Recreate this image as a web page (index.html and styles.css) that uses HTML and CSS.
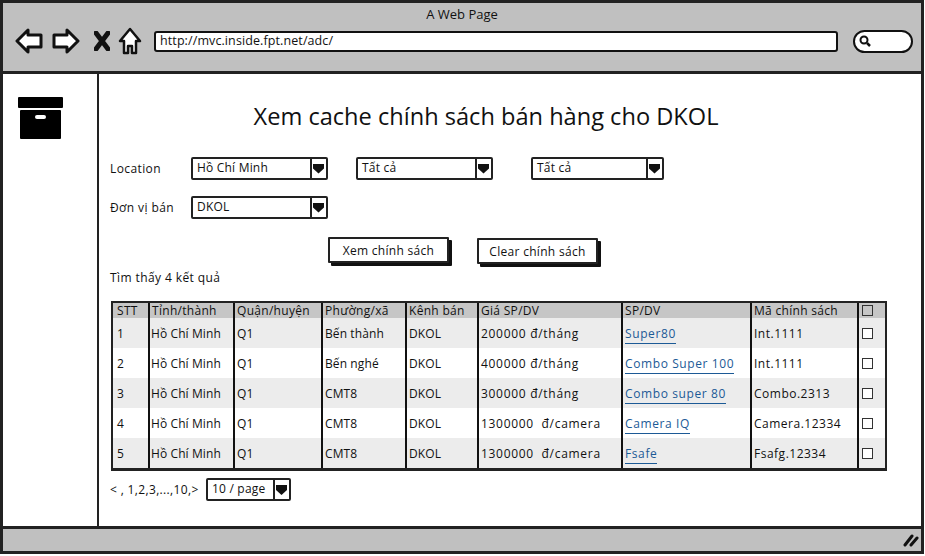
FILE: index.html
```html
<!DOCTYPE html>
<html>
<head>
    <title>A Web Page</title>
    <link rel="stylesheet" href="styles.css">
</head>
<body>
<div class="window">

    <!-- Browser chrome -->
    <div class="chrome">
        <div class="page-title">A Web Page</div>
        <div class="toolbar">
            <svg class="nav-icon" width="28" height="26" viewBox="0 0 28 26"><path d="M2 13 L13 2 V7 H26 V19 H13 V24 Z" fill="#fff" stroke="#111" stroke-width="3" stroke-linejoin="round"/></svg>
            <svg class="nav-icon" width="28" height="26" viewBox="0 0 28 26"><path d="M26 13 L15 2 V7 H2 V19 H15 V24 Z" fill="#fff" stroke="#111" stroke-width="3" stroke-linejoin="round"/></svg>
            <svg class="nav-icon stop" width="16" height="20" viewBox="0 0 16 20"><path d="M2 2 L14 18 M14 2 L2 18" stroke="#111" stroke-width="5" stroke-linecap="round"/></svg>
            <svg class="nav-icon home" width="24" height="28" viewBox="0 0 24 28"><path d="M12 2 L22 14 H18 V26 H14 V19 H10 V26 H6 V14 H2 Z" fill="#fff" stroke="#111" stroke-width="2.5" stroke-linejoin="round"/></svg>
            <div class="address">http://mvc.inside.fpt.net/adc/</div>
            <div class="search">
                <svg width="14" height="14" viewBox="0 0 14 14"><circle cx="6" cy="6" r="3.5" fill="#fff" stroke="#111" stroke-width="2"/><path d="M9 9 L12 12" stroke="#111" stroke-width="2.5"/></svg>
            </div>
        </div>
    </div>

    <div class="main">
        <div class="sidebar">
            <svg width="46" height="42" viewBox="0 0 46 42"><rect x="0" y="0" width="45" height="11" rx="1" fill="#000"/><rect x="2" y="13" width="41" height="29" rx="1" fill="#000"/><rect x="17" y="18" width="11" height="4" rx="2" fill="#fff"/></svg>
        </div>

        <div class="content">
            <h1>Xem cache chính sách bán hàng cho DKOL</h1>

            <div class="filter-row">
                <label>Location</label>
                <div class="select w-wide"><span>Hồ Chí Minh</span><i class="arrow"></i></div>
                <div class="select w-wide gap-a"><span>Tất cả</span><i class="arrow"></i></div>
                <div class="select w-narrow gap-b"><span>Tất cả</span><i class="arrow"></i></div>
            </div>
            <div class="filter-row second">
                <label>Đơn vị bán</label>
                <div class="select w-wide"><span>DKOL</span><i class="arrow"></i></div>
            </div>

            <div class="actions">
                <button>Xem chính sách</button>
                <button>Clear chính sách</button>
            </div>

            <p class="result-count">Tìm thấy 4 kết quả</p>

            <table>
                <colgroup>
                    <col class="c-stt"><col class="c-city"><col class="c-district"><col class="c-ward">
                    <col class="c-channel"><col class="c-price"><col class="c-service"><col class="c-code"><col class="c-check">
                </colgroup>
                <thead>
                    <tr>
                        <th>STT</th><th>Tỉnh/thành</th><th>Quận/huyện</th><th>Phường/xã</th><th>Kênh bán</th>
                        <th>Giá SP/DV</th><th>SP/DV</th><th>Mã chính sách</th><th><i class="check"></i></th>
                    </tr>
                </thead>
                <tbody>
                    <tr>
                        <td>1</td><td>Hồ Chí Minh</td><td>Q1</td><td>Bến thành</td><td>DKOL</td>
                        <td>200000 đ/tháng</td><td><a href="#">Super80</a></td><td>Int.1111</td><td><i class="check"></i></td>
                    </tr>
                    <tr>
                        <td>2</td><td>Hồ Chí Minh</td><td>Q1</td><td>Bến nghé</td><td>DKOL</td>
                        <td>400000 đ/tháng</td><td><a href="#">Combo Super 100</a></td><td>Int.1111</td><td><i class="check"></i></td>
                    </tr>
                    <tr>
                        <td>3</td><td>Hồ Chí Minh</td><td>Q1</td><td>CMT8</td><td>DKOL</td>
                        <td>300000 đ/tháng</td><td><a href="#">Combo super 80</a></td><td>Combo.2313</td><td><i class="check"></i></td>
                    </tr>
                    <tr>
                        <td>4</td><td>Hồ Chí Minh</td><td>Q1</td><td>CMT8</td><td>DKOL</td>
                        <td>1300000&nbsp; đ/camera</td><td><a href="#">Camera IQ</a></td><td>Camera.12334</td><td><i class="check"></i></td>
                    </tr>
                    <tr>
                        <td>5</td><td>Hồ Chí Minh</td><td>Q1</td><td>CMT8</td><td>DKOL</td>
                        <td>1300000&nbsp; đ/camera</td><td><a href="#">Fsafe</a></td><td>Fsafg.12334</td><td><i class="check"></i></td>
                    </tr>
                </tbody>
            </table>

            <div class="pager">
                <span class="pages">&lt; , 1,2,3,...,10,&gt;</span>
                <div class="select w-page"><span>10 / page</span><i class="arrow"></i></div>
            </div>
        </div>
    </div>

    <div class="statusbar">
        <svg width="16" height="14" viewBox="0 0 16 14"><path d="M2 12 L9 3 M8 12 L14 5" stroke="#111" stroke-width="3" stroke-linecap="round"/></svg>
    </div>
</div>
</body>
</html>
```

FILE: styles.css
```css
* { box-sizing: border-box; }
body { margin: 0; background: #fff; color: #111; font-family: "Open Sans", "Noto Sans", sans-serif; font-size: 12px; letter-spacing: 0.1px; }

.window { width: 924px; height: 554px; border: 3px solid #222; display: flex; flex-direction: column; }

/* chrome */
.chrome { height: 71px; background: #c0c0c0; border-bottom: 3px solid #222; flex: none; }
.page-title { text-align: center; font-size: 13px; line-height: 16px; padding-top: 3px; letter-spacing: 0; }
.toolbar { display: flex; align-items: center; padding: 0 10px 0 12px; margin-top: 5px; }
.nav-icon { flex: none; margin-right: 9px; }
.nav-icon.stop { margin: 0 8px 0 5px; }
.nav-icon.home { margin-right: 12px; }
.address { flex: none; width: 684px; height: 21px; background: #fff; border: 2px solid #111; border-radius: 3px; padding-left: 4px; line-height: 16px; font-size: 12.5px; }
.search { flex: none; width: 60px; height: 23px; margin-left: 15px; background: #fff; border: 2px solid #111; border-radius: 12px; display: flex; align-items: center; padding-left: 3px; }

.main { flex: 1; display: flex; min-height: 0; }
.sidebar { width: 96px; flex: none; border-right: 2px solid #222; padding: 23px 0 0 15px; }
.content { flex: 1; padding: 0 0 0 11px; }

h1 { margin: 0; padding-top: 26px; height: 82px; text-align: center; font-size: 23.6px; line-height: 32px; font-weight: 400; letter-spacing: 0; width: 752px; }

/* filters */
.filter-row { display: flex; align-items: center; height: 24px; }
.filter-row.second { margin-top: 15px; }
.filter-row label { width: 81px; flex: none; letter-spacing: 0.4px; }
.select { display: flex; height: 23px; border: 2px solid #222; border-radius: 2px; background: #fff; flex: none; }
.select span { flex: 1; padding-left: 4px; line-height: 17px; white-space: nowrap; letter-spacing: 0.2px; }
.select .arrow { width: 16px; flex: none; border-left: 2px solid #222; position: relative; }
.select .arrow::after { content: ""; position: absolute; left: 1px; top: 5px; width: 11px; height: 10px; background: #111; clip-path: polygon(0 0, 100% 0, 100% 50%, 50% 100%, 0 50%); }
.w-wide { width: 137px; }
.w-narrow { width: 133px; }
.gap-a { margin-left: 28px; }
.gap-b { margin-left: 38px; }
.w-page { width: 85px; }

/* buttons */
.actions { display: flex; margin: 18px 0 0 218px; gap: 28px; }
button { width: 121px; height: 26px; background: #fff; border: 2px solid #222; border-radius: 1px; box-shadow: 3px 3px 0 #111; font: inherit; color: inherit; letter-spacing: 0.3px; padding: 0; }
.actions button:last-child { margin-top: 1px; }

.result-count { margin: 5px 0 0; line-height: 17px; letter-spacing: 0.4px; }

/* table */
table { border-collapse: separate; border-spacing: 0; table-layout: fixed; width: 776px; margin: 15px 0 0 1px; border: 2px solid #222; border-bottom-width: 3px; }
.c-stt { width: 35px; }
.c-city { width: 85px; }
.c-district { width: 88px; }
.c-ward { width: 84px; }
.c-channel { width: 72px; }
.c-price { width: 144px; }
.c-service { width: 129px; }
.c-code { width: 107px; }
.c-check { width: 28px; }
th, td { text-align: left; font-weight: 400; padding: 0 0 0 2px; border-left: 2px solid #111; white-space: nowrap; }
th:first-child, td:first-child { border-left: 0; padding-left: 4px; }
th { height: 15px; line-height: 14px; background: #c6c6c6; letter-spacing: 0.3px; }
td { height: 30px; }
td:nth-child(2) { padding-left: 1px; }
td:nth-child(6) { letter-spacing: 0.7px; }
td:nth-child(7) { letter-spacing: 0.6px; }
td:nth-child(8) { letter-spacing: 0.5px; }
tbody tr:nth-child(odd) td { background: #ececec; }
a { color: #1c5a96; border-bottom: 1px solid #1c5a96; text-decoration: none; padding-bottom: 1px; }
.check { display: block; width: 11px; height: 11px; border: 1px solid #333; background: #fff; margin-left: 1px; }
th .check { background: none; }

.pager { display: flex; align-items: center; margin-top: 7px; letter-spacing: 0.35px; }
.pages { width: 96px; flex: none; }

/* status bar */
.statusbar { height: 25px; flex: none; background: #c0c0c0; border-top: 3px solid #222; display: flex; align-items: center; justify-content: flex-end; padding-right: 2px; }
```
